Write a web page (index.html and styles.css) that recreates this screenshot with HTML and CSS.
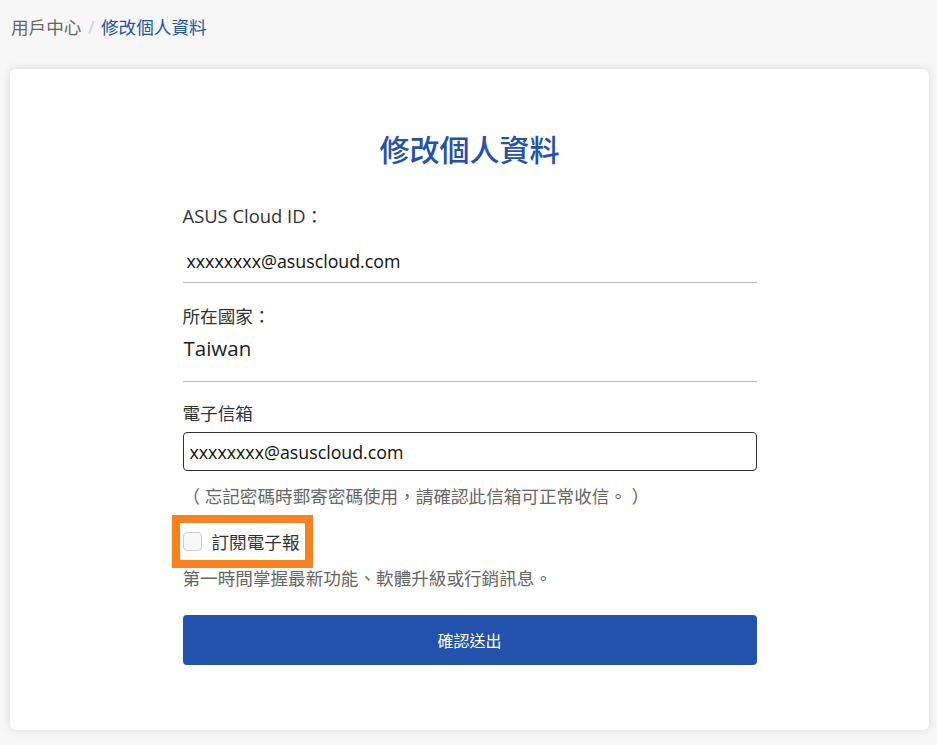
FILE: index.html
```html
<!DOCTYPE html>
<html lang="zh-Hant">
	<head>
		<meta charset="UTF-8">
		<title>修改個人資料</title>
		<link rel="stylesheet" href="styles.css">
	</head>
	<body>
		<div class="page">
			<div class="crumbs">
				<a class="crumb">用戶中心</a>
				<span class="sep">/</span>
				<span class="crumb-now">修改個人資料</span>
			</div>
			<div class="card">
				<h1 class="title">修改個人資料</h1>
				<form class="form">
					<div class="label label-first"><span class="latin">ASUS Cloud ID</span>：</div>
					<div class="value">xxxxxxxx@asuscloud.com</div>

					<div class="label">所在國家：</div>
					<div class="value value-big">Taiwan</div>

					<div class="label label-mail">電子信箱</div>
					<input class="input" type="text" value="xxxxxxxx@asuscloud.com">
					<div class="hint">（ 忘記密碼時郵寄密碼使用，請確認此信箱可正常收信。 ）</div>

					<label class="subscribe">
						<input class="check" type="checkbox">
						<span>訂閱電子報</span>
					</label>
					<div class="hint hint-sub">第一時間掌握最新功能、軟體升級或行銷訊息。</div>

					<button class="submit" type="button">確認送出</button>
				</form>
			</div>
		</div>
	</body>
</html>
```

FILE: styles.css
```css
body {
	margin: 0;
	background: #f7f7f7;
	font-family: "Open Sans", "Noto Sans CJK TC", sans-serif;
	color: #333;
}
.page {
	padding: 0 8px 15px 10px;
}
.crumbs {
	height: 40px;
	padding: 14px 0 0 1px;
	box-sizing: border-box;
	font-size: 17.6px;
	line-height: 26px;
}
.crumb {
	color: #666;
}
.sep {
	color: #ccc;
	margin: 0 2px;
}
.crumb-now {
	color: #2352ad;
}
.card {
	margin-top: 29px;
	background: #fff;
	border-radius: 6px;
	box-shadow: 0 0 10px rgba(0, 0, 0, .13);
	padding: 61px 0 65px;
}
.title {
	margin: 0;
	text-align: center;
	font-size: 30px;
	line-height: 40px;
	font-weight: 500;
	color: #2352ad;
}
.form {
	width: 574px;
	margin: 0 auto;
	display: flex;
	flex-direction: column;
	align-items: flex-start;
	font-size: 17.6px;
	line-height: 26px;
}
.label {
	margin-top: 20px;
	color: #333;
}
.label-first {
	margin-top: 33px;
}
.label-mail {
	margin-top: 18px;
}
.latin {
	font-size: 18.4px;
}
.value {
	align-self: stretch;
	margin-top: 19px;
	padding: 0 4px 8px;
	border-bottom: 1px solid #bbb;
	color: #111;
	font-size: 17.8px;
}
.value-big {
	margin-top: 6px;
	padding: 0 1px 20px;
	font-size: 20.5px;
	color: #222;
}
.input {
	align-self: stretch;
	margin-top: 6px;
	height: 39px;
	box-sizing: border-box;
	padding: 0 6px;
	border: 1px solid #333;
	border-radius: 4px;
	font: 17.8px "Open Sans", sans-serif;
	color: #111;
	outline: none;
}
.hint {
	margin-top: 12px;
	color: #666;
}
.subscribe {
	display: flex;
	align-items: center;
	gap: 10px;
	height: 37px;
	margin: 14px 0 0 -3px;
	padding: 0 6px 0 3px;
	outline: 8px solid #f7821f;
	color: #333;
}
.check {
	appearance: none;
	margin: 0;
	width: 19px;
	height: 19px;
	border: 1px solid #ccc;
	border-radius: 4px;
	background: #f8f8f8;
}
.hint-sub {
	margin-top: 5px;
}
.submit {
	align-self: stretch;
	margin-top: 24px;
	height: 50px;
	border: 0;
	border-radius: 4px;
	background: #2352ad;
	color: #fff;
	font: 16px "Open Sans", "Noto Sans CJK TC", sans-serif;
}
```
